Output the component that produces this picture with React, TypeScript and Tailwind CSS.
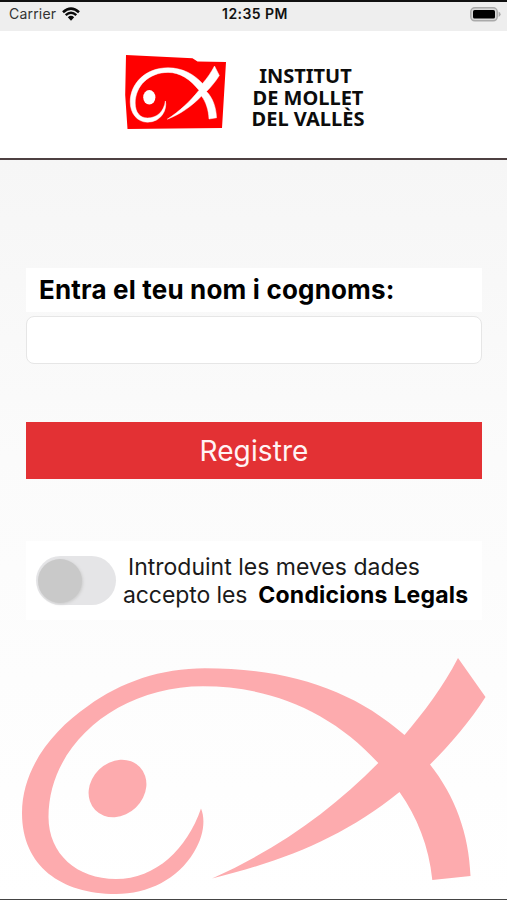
import { useState } from "react";

const StatusBar = () => {
  return (
    <div className="grid h-[31px] grid-cols-3 items-center border-t-2 border-[#111111] bg-[#eeeeee] pr-[6px] pb-[5px] pl-[9px] text-[14px] leading-none text-[#333333]">
      <div className="flex items-center gap-[6px]">
        <span className="tracking-[0.2px]">Carrier</span>
        <svg className="h-[14px] w-[18px]" viewBox="0 0 18 14">
          <path d="M1 5.2Q9-2 17 5.2" fill="none" stroke="#0a0a0a" strokeWidth="2.6" />
          <path d="M3.7 8.2Q9 3.2 14.3 8.2" fill="none" stroke="#0a0a0a" strokeWidth="2.4" />
          <path d="M5.8 10.3Q9 7.4 12.2 10.3L9 13.8Z" fill="#0a0a0a" />
        </svg>
      </div>
      <div className="text-center font-semibold tracking-[0.45px] whitespace-nowrap text-[#111111]">12:35 PM</div>
      <div className="flex justify-end">
        <svg className="h-[15px] w-[31px]" viewBox="0 0 31 15">
          <rect x="0.8" y="0.8" width="26.4" height="13" rx="4" fill="#d8d8d8" stroke="#aaaaaa" strokeWidth="1.5" />
          <rect x="3" y="3" width="22" height="8.6" rx="1.6" fill="#000000" />
          <path d="M28.6 4.6Q30.6 5.6 30.6 7.3T28.6 10Z" fill="#aaaaaa" />
        </svg>
      </div>
    </div>
  );
};

const Logo = () => {
  return (
    <svg className="h-[76px] w-[103px]" viewBox="124 54 103 76">
      <path d="M126 55L192.5 58.3L197.5 61.6L226 62L222 128L127.5 129L125.2 95Z" fill="#ff0000" />
      <path
        d="M165.4 101C167.4 110 161 122.2 147.5 122.2C137 122.2 130.2 113 130.2 102C130.2 84 145 67.8 168 67.8C183 67.8 194 74.5 202.5 83.5C207.5 78 211.3 72 214.5 66L219.3 75.5C215.5 81.5 211 87 206.5 91.5C213 98 216.2 108 216.5 117.8L209 119C208.6 110 206 102 201.5 96C192 106 180 114.5 167.3 119.2C180 111 190 101.5 199 90.3C190 79 180 72.4 168 72.4C149 72.4 135.2 86 135.2 103C135.2 112.5 140 118 147.5 118C157 118 164 111.5 165.4 101Z"
        fill="#ffffff"
        stroke="#ffffff"
        strokeWidth="0.5"
      />
      <ellipse cx="149.3" cy="97.3" rx="6.1" ry="7.2" fill="#ffffff" />
    </svg>
  );
};

const Header = () => {
  return (
    <div className="flex h-[129px] justify-center border-b-2 border-[#4d4041] bg-white pt-[23px] pr-[19px]">
      <Logo />
      <div className="ml-[25px] pt-[11px] text-center font-['Noto_Sans',sans-serif] text-[20px] leading-[21.5px] font-bold whitespace-nowrap text-[#0c0c0c]">
        <div className="pr-[5px]">INSTITUT</div>
        <div>DE MOLLET</div>
        <div>DEL VALLÈS</div>
      </div>
    </div>
  );
};

const Fish = () => {
  return (
    <svg className="h-[237px] w-[464px]" viewBox="22 658 464 237" fill="#fdabae">
      <path d="M201 808.5C205.500 819 204 836 194 852C178 879 148 894 116 894C61 894 22 866 22 813C22 768 53 730 88 706C121 682 161 668.300 205 668.300C289 668.300 353 690 404.500 735C424 712 443 687 458 658L485.500 697C470 721 451 744 430 764.500C455 796 469 834 470.500 876L432.300 880C429 846 417 817 399.500 792C342 838 286 860 212 878.500C278 849 332 810 378.300 763C330 710 268 686.300 203 686.300C119 686.300 48.500 744 48.500 817C48.500 854 77 879 116 879C156 879 187 849 201 808.500Z" />
      <ellipse cx="117.500" cy="788.500" rx="31" ry="26.500" transform="rotate(-44 117.500 788.500)" />
    </svg>
  );
};

export default function App() {
  const [name, setName] = useState("");
  const [accepted, setAccepted] = useState(false);

  return (
    <div className="flex h-[900px] w-[507px] flex-col overflow-hidden border-b border-[#444444] bg-white font-[Inter,sans-serif] text-black">
      <StatusBar />
      <Header />

      <div className="flex grow flex-col bg-linear-to-b from-[#f6f6f6] via-[#fbfbfb] via-40% to-white pt-[108px] pr-[25px] pl-[26px]">
        {/* Name */}
        <label htmlFor="name" className="flex h-11 items-center bg-white pb-px pl-[13px] text-[26px] font-bold tracking-[0.18px] whitespace-nowrap">
          Entra el teu nom i cognoms:
        </label>
        <input
          id="name"
          value={name}
          onChange={(e) => setName(e.target.value)}
          className="mt-1 h-12 w-full rounded-lg border border-[#e6e6e6] bg-white px-3 text-2xl outline-none"
        />

        <button className="mt-[58px] h-[57px] w-full bg-[#e33134] text-[28px] tracking-[0.1px] text-[#fff4f4]">
          Registre
        </button>

        {/* Legal terms */}
        <div className="mt-[62px] flex h-[79px] bg-white pl-[10px]">
          <button
            role="switch"
            aria-checked={accepted}
            onClick={() => setAccepted(!accepted)}
            className={`mt-[15px] flex h-[49px] w-20 shrink-0 items-center rounded-full bg-[#e5e5e7] px-[2px] ${accepted ? "justify-end" : ""}`}
          >
            <span className="size-[44px] rounded-full bg-[#c9c9c9] shadow-[1px_1px_3px_#cccccc]" />
          </button>
          <div className="ml-[7px] pt-[12px] text-[23px] leading-7 whitespace-nowrap text-[#1a1a1a]">
            <div className="pl-[5px]">Introduint les meves dades</div>
            <div className="flex gap-[11px]">
              <span className="tracking-[-0.1px]">accepto les</span>
              <a className="font-bold tracking-[0.22px] text-black">Condicions Legals</a>
            </div>
          </div>
        </div>

        <div className="-ml-1 pt-[38px]">
          <Fish />
        </div>
      </div>
    </div>
  );
}
